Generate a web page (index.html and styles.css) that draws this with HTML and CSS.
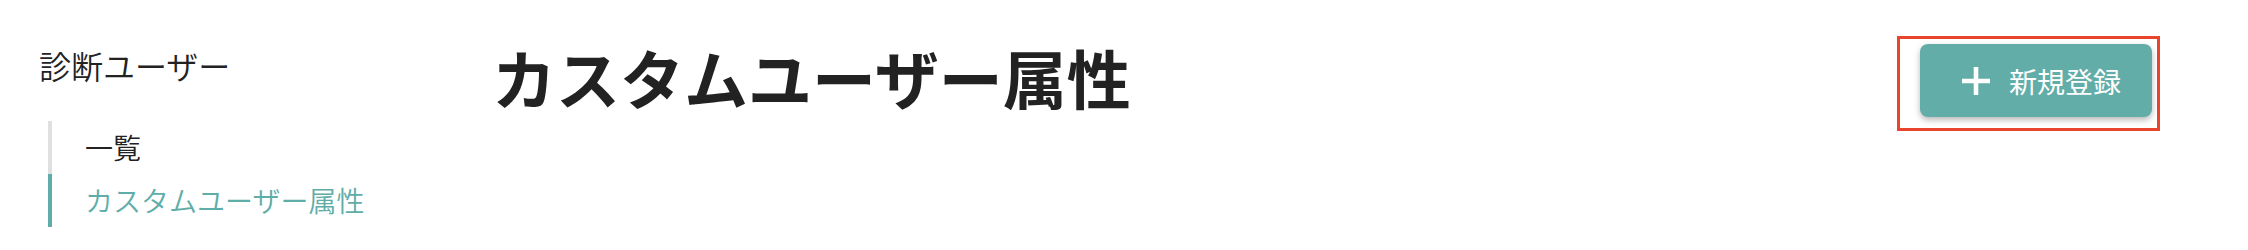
FILE: index.html
```html
<!DOCTYPE html>
<html lang="ja">
<head>
<meta charset="utf-8">
<title>カスタムユーザー属性</title>
<link rel="stylesheet" href="styles.css">
</head>
<body>
<div class="page">
  <aside class="sidebar">
    <div class="sidebar-title">診断ユーザー</div>
    <nav class="nav">
      <a class="nav-item">一覧</a>
      <a class="nav-item active">カスタムユーザー属性</a>
    </nav>
  </aside>
  <h1 class="title">カスタムユーザー属性</h1>
  <div class="highlight">
    <button class="btn-primary" type="button">
      <svg class="btn-icon" viewBox="0 0 28 28" width="28" height="28" aria-hidden="true">
        <path d="M14 0v28M0 14h28" stroke="#fff" stroke-width="4.6" fill="none"/>
      </svg>
      <span>新規登録</span>
    </button>
  </div>
</div>
</body>
</html>
```
FILE: styles.css
```css
html, body {
  margin: 0;
  padding: 0;
  background: #fff;
}
body {
  font-family: "Noto Sans CJK JP", "Noto Sans", sans-serif;
  color: #222;
}
.page {
  display: flex;
  align-items: flex-start;
  padding: 0 88px 0 36px;
}
.sidebar {
  width: 456px;
  flex: none;
  padding-top: 45px;
}
.sidebar-title {
  font-size: 32px;
  line-height: 40px;
  font-weight: 350;
  padding-left: 3px;
  color: #222;
}
.nav {
  display: flex;
  flex-direction: column;
  margin-top: 36px;
  margin-left: 12px;
}
.nav-item {
  display: block;
  height: 53px;
  line-height: 53px;
  padding-left: 33px;
  font-size: 28px;
  font-weight: 350;
  border-left: 4px solid #e0e0e0;
  color: #222;
  text-decoration: none;
}
.nav-item.active {
  border-left-color: #5fada8;
  color: #5fada8;
}
.title {
  margin: 0;
  padding-top: 40px;
  font-size: 64px;
  line-height: 72px;
  font-weight: 700;
  color: #222;
}
.highlight {
  margin-left: auto;
  margin-top: 36px;
  border: 3px solid #e8452c;
  padding: 5px 5px 11px 20px;
}
.btn-primary {
  display: flex;
  align-items: center;
  gap: 19px;
  width: 232px;
  height: 73px;
  padding: 0 0 0 42px;
  border: none;
  border-radius: 8px;
  background: #62ada8;
  color: #fff;
  font-family: inherit;
  font-size: 28px;
  font-weight: 400;
  box-shadow: 0 3px 6px rgba(0, 0, 0, 0.28);
  cursor: pointer;
}
.btn-icon {
  display: block;
  flex: none;
}
```
